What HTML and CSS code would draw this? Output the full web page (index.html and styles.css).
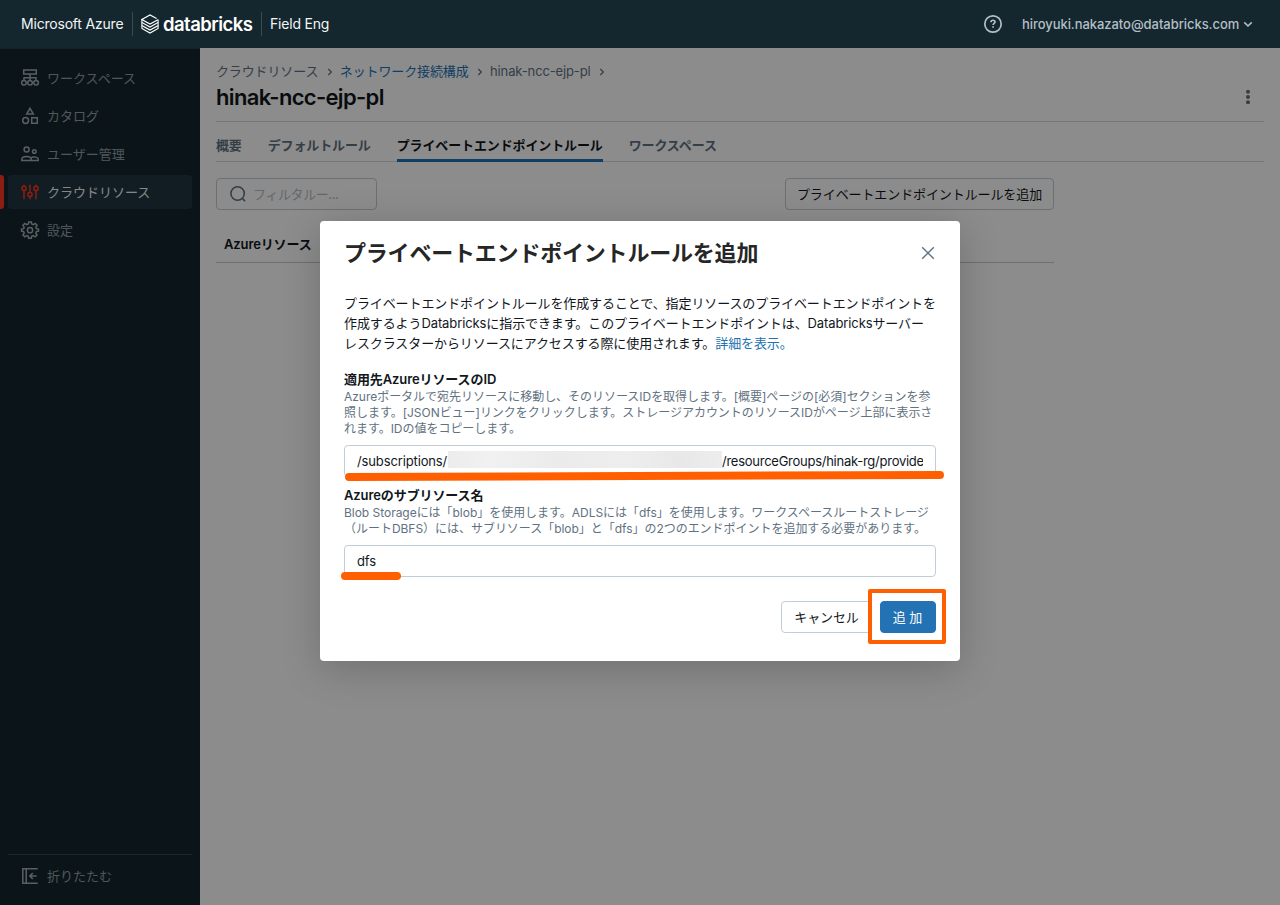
FILE: index.html
```html
<!DOCTYPE html>
<html lang="ja">
<head>
    <meta charset="UTF-8">
    <meta name="viewport" content="width=device-width, initial-scale=1.0">
    <title>hinak-ncc-ejp-pl - Databricks</title>
    <link rel="stylesheet" href="styles.css">
</head>
<body>
    <header class="topbar">
        <span class="brand-azure">Microsoft Azure</span>
        <span class="brand-logo">
            <svg width="18" height="20" viewBox="0 0 18 20" fill="none" stroke="#fff" stroke-width="1.1">
                <path d="M16.9 5.7 9 10 .9 5.5 9 1l6.6 3.6"/>
                <path d="M.9 5.5v3L9 13l8.1-4.5v-3"/>
                <path d="M.9 8.6v3L9 16.1l8.1-4.5v-3"/>
                <path d="M.9 11.7v2.8L9 19l8.1-4.5v-2.8"/>
            </svg>
            <span class="brand-name">databricks</span>
        </span>
        <span class="brand-account">Field Eng</span>
        <svg class="help" width="20" height="20" viewBox="0 0 20 20" fill="none" stroke="#b3bfc5" stroke-width="1.7">
            <circle cx="10" cy="10" r="8.2"/>
            <path d="M8 8.2c0-2.7 4-2.5 4-.2 0 1.4-1.9 1.4-1.9 3.1M10.1 12.3v1.5"/>
        </svg>
        <span class="user">hiroyuki.nakazato@databricks.com</span>
        <svg class="caret" width="10" height="8" viewBox="0 0 10 8" fill="none" stroke="#b3bfc5" stroke-width="1.6">
            <path d="M1.3 2.4 5 6 8.7 2.4"/>
        </svg>
    </header>

    <div class="shell">
        <nav class="sidebar">
            <a class="nav-item">
                <svg width="20" height="20" viewBox="0 0 20 20">
                    <path d="M3.7 2h12.6v4H3.7zM10 6v6M4 12.5V9.7h12v2.8"/>
                    <circle cx="3.9" cy="14.8" r="2.3"/><circle cx="10" cy="14.8" r="2.3"/><circle cx="16.1" cy="14.8" r="2.3"/>
                </svg>
                ワークスペース
            </a>
            <a class="nav-item">
                <svg width="20" height="20" viewBox="0 0 20 20">
                    <path d="M10 2.3 13.3 8H6.7zM11.7 11.7h5.6v5.6h-5.6z"/>
                    <circle cx="5.6" cy="14.5" r="2.9"/>
                </svg>
                カタログ
            </a>
            <a class="nav-item">
                <svg width="20" height="20" viewBox="0 0 20 20">
                    <circle cx="6.6" cy="5.6" r="2.5"/><circle cx="14.3" cy="7.5" r="1.8"/>
                    <path d="M1.8 16.4v-1c0-3.8 9.4-3.8 9.4 0v1zM11.4 16.4h6.8v-1.1c0-2.2-4.6-3-7.1-1.7"/>
                </svg>
                ユーザー管理
            </a>
            <a class="nav-item active">
                <svg width="20" height="20" viewBox="0 0 20 20">
                    <path d="M4 2.7v1.6M4 8.5v8.8M10 2.7v7.6M10 14.7v2.6M16 2.7v1.6M16 8.5v8.8"/>
                    <circle cx="4" cy="6.4" r="2.1"/><circle cx="10" cy="12.5" r="2.1"/><circle cx="16" cy="6.4" r="2.1"/>
                </svg>
                クラウドリソース
            </a>
            <a class="nav-item">
                <svg width="20" height="20" viewBox="0 0 20 20">
                    <path d="M8.3 4 8.7 1.9h2.6L11.7 4l1.5.7 2-1.2 1.9 1.9-1.3 1.9.6 1.4 2.1.4v2l-2.1.5-.6 1.5 1.3 1.9-1.9 1.8-2-1.2-1.5.7-.4 2H8.7l-.4-2-1.5-.7-2 1.2L2.9 15l1.3-1.9-.6-1.5-2.1-.5v-2l2.1-.4.6-1.4-1.3-1.9 1.9-1.9 2 1.2z"/>
                    <circle cx="10" cy="10.2" r="2.6"/>
                </svg>
                設定
            </a>
            <div class="nav-footer">
                <a class="nav-item">
                    <svg width="20" height="20" viewBox="0 0 20 20">
                        <path d="M17.7 2.8H2.8v14.4h14.9M6.2 2.8v14.4M16.6 10H10M12.8 7 9.8 10l3 3"/>
                    </svg>
                    折りたたむ
                </a>
            </div>
        </nav>

        <main class="content">
            <div class="breadcrumb">
                <span>クラウドリソース</span>
                <svg width="6" height="8" viewBox="0 0 6 8"><path d="M1.3 1 4.3 4l-3 3"/></svg>
                <a>ネットワーク接続構成</a>
                <svg width="6" height="8" viewBox="0 0 6 8"><path d="M1.3 1 4.3 4l-3 3"/></svg>
                <span>hinak-ncc-ejp-pl</span>
                <svg width="6" height="8" viewBox="0 0 6 8"><path d="M1.3 1 4.3 4l-3 3"/></svg>
            </div>
            <div class="title-row">
                <h1>hinak-ncc-ejp-pl</h1>
                <svg width="16" height="16" viewBox="0 0 16 16" fill="#5f7281">
                    <circle cx="8" cy="2.7" r="2"/><circle cx="8" cy="8" r="2"/><circle cx="8" cy="13.3" r="2"/>
                </svg>
            </div>
            <div class="tabs">
                <a>概要</a>
                <a>デフォルトルール</a>
                <a class="selected">プライベートエンドポイントルール</a>
                <a>ワークスペース</a>
            </div>
            <div class="rules">
                <div class="toolbar">
                    <div class="filter">
                        <svg width="18" height="18" viewBox="0 0 18 18" fill="none" stroke="#5f7281" stroke-width="1.6">
                            <circle cx="8.6" cy="8.5" r="6.7"/><path d="m13.2 13.2 2.8 2.9"/>
                        </svg>
                        フィルタルー...
                    </div>
                    <button class="btn">プライベートエンドポイントルールを追加</button>
                </div>
                <div class="table-head">Azureリソース</div>
            </div>
        </main>

        <div class="mask">
            <div class="modal">
                <div class="modal-header">
                    <h2>プライベートエンドポイントルールを追加</h2>
                    <svg width="16" height="16" viewBox="0 0 16 16" fill="none" stroke="#5f7281" stroke-width="1.4">
                        <path d="m2.2 2.2 11.6 11.6M13.8 2.2 2.2 13.8"/>
                    </svg>
                </div>
                <p class="intro">
                    プライベートエンドポイントルールを作成することで、指定リソースのプライベートエンドポイントを<br>作成するようDatabricksに指示できます。このプライベートエンドポイントは、Databricksサーバー<br>レスクラスターからリソースにアクセスする際に使用されます。<a>詳細を表示。</a>
                </p>
                <div class="field">
                    <label>適用先AzureリソースのID</label>
                    <p class="hint">Azureポータルで宛先リソースに移動し、そのリソースIDを取得します。[概要]ページの[必須]セクションを参<br>照します。[JSONビュー]リンクをクリックします。ストレージアカウントのリソースIDがページ上部に表示さ<br>れます。IDの値をコピーします。</p>
                    <div class="input">
                        <span class="input-start">/subscriptions/3</span>
                        <span class="redacted"></span>
                        <span class="input-end">/resourceGroups/hinak-rg/provide</span>
                    </div>
                    <svg class="marker marker-id" width="602" height="14" viewBox="0 0 602 14">
                        <path d="M6 8 597 6"/>
                    </svg>
                </div>
                <div class="field">
                    <label>Azureのサブリソース名</label>
                    <p class="hint">Blob Storageには「blob」を使用します。ADLSには「dfs」を使用します。ワークスペースルートストレージ<br>（ルートDBFS）には、サブリソース「blob」と「dfs」の2つのエンドポイントを追加する必要があります。</p>
                    <div class="input">dfs</div>
                    <svg class="marker marker-name" width="60" height="8" viewBox="0 0 60 8">
                        <path d="M4 4h52"/>
                    </svg>
                </div>
                <div class="actions">
                    <button class="btn cancel">キャンセル</button>
                    <button class="btn primary">追 加</button>
                    <span class="marker-box"></span>
                </div>
            </div>
        </div>
    </div>
</body>
</html>
```
FILE: styles.css
```css
* {
    box-sizing: border-box;
}
body {
    margin: 0;
    height: 905px;
    overflow: hidden;
    font-family: Inter, "Noto Sans CJK JP", sans-serif;
    font-size: 13px;
    line-height: 20px;
    color: #11171c;
    background-color: #fff;
}
h1, h2, p {
    margin: 0;
}
svg {
    flex: none;
    display: block;
}
a {
    color: #2272b4;
}

/* Top bar */
.topbar {
    display: flex;
    align-items: center;
    height: 48px;
    padding: 0 27px 0 21px;
    background-color: #14272e;
    color: #fff;
    white-space: nowrap;
}
.brand-azure, .brand-account {
    font-size: 14px;
    letter-spacing: -0.2px;
    color: #f2f5f6;
}
.brand-azure {
    width: 111px;
}
.brand-logo {
    display: flex;
    align-items: center;
    gap: 4px;
    width: 130px;
    height: 24px;
    padding-left: 8px;
    border-left: 1px solid #3a4b52;
    border-right: 1px solid #3a4b52;
}
.brand-name {
    font-size: 18.5px;
    font-weight: 600;
    letter-spacing: -0.55px;
}
.brand-account {
    padding-left: 8px;
}
.help {
    margin-left: auto;
}
.user {
    width: 217px;
    margin-left: 19px;
    font-weight: 500;
    letter-spacing: -0.06px;
    color: #b3bfc5;
}
.caret {
    margin-left: 4px;
}

/* Sidebar */
.shell {
    position: relative;
    display: flex;
    height: 857px;
}
.sidebar {
    display: flex;
    flex-direction: column;
    gap: 4px;
    width: 200px;
    padding: 12px 8px 8px;
    border-top: 1px solid #2c3d44;
    background-color: #14272e;
}
.nav-item {
    position: relative;
    display: flex;
    align-items: center;
    gap: 7px;
    height: 34px;
    padding: 0 0 1px 12px;
    border-radius: 4px;
    color: #929fa6;
}
.nav-item svg {
    margin-top: 1px;
    fill: none;
    stroke: #a3b0b7;
    stroke-width: 1.5;
}
.nav-item.active {
    background-color: #20353f;
    color: #f2f5f6;
}
.nav-item.active svg {
    stroke: #ff3621;
}
.nav-item.active::before {
    content: "";
    position: absolute;
    left: -8px;
    top: 0;
    width: 4px;
    height: 34px;
    border-radius: 0 3px 3px 0;
    background-color: #ff3621;
}
.nav-footer {
    margin-top: auto;
    padding: 4px 0;
    border-top: 1px solid #35464d;
}

/* Page */
.content {
    flex: 1;
    padding: 13px 16px 0;
}
.breadcrumb {
    display: flex;
    align-items: center;
    height: 20px;
    color: #5f7281;
    letter-spacing: -0.13px;
}
.breadcrumb svg {
    margin: 1px 7px 0 8.5px;
    fill: none;
    stroke: #5f7281;
    stroke-width: 1.3;
}
.title-row {
    display: flex;
    align-items: center;
    justify-content: space-between;
    height: 41px;
    padding-bottom: 8px;
    border-bottom: 1px solid #d1d9e1;
}
.title-row svg {
    margin-right: 8px;
}
h1 {
    font-size: 22px;
    line-height: 28px;
    font-weight: 600;
    letter-spacing: -0.67px;
}
.tabs {
    display: flex;
    gap: 26px;
    height: 40px;
    border-bottom: 1px solid #d1d9e1;
}
.tabs a {
    height: 40px;
    padding-top: 13px;
    font-weight: 600;
    letter-spacing: -0.13px;
    color: #5f7281;
}
.tabs .selected {
    border-bottom: 3px solid #2272b4;
    color: #11171c;
}
.rules {
    width: 838px;
    padding-top: 16px;
}
.toolbar {
    display: flex;
    justify-content: space-between;
}
.filter {
    display: flex;
    align-items: center;
    gap: 6px;
    width: 161px;
    height: 32px;
    padding-left: 12px;
    border: 1px solid #c0cdd8;
    border-radius: 4px;
    letter-spacing: -0.4px;
    color: #b3bec6;
}
.btn {
    height: 32px;
    padding: 0 12px 1px;
    border: 1px solid #c0cdd8;
    border-radius: 4px;
    background: none;
    font: inherit;
    letter-spacing: -0.1px;
    color: #11171c;
    white-space: nowrap;
}
.rules .btn {
    width: 269px;
    padding: 0 0 1px;
}
.table-head {
    height: 53px;
    padding: 24px 8px 0;
    border-bottom: 1px solid #c0cdd8;
    font-weight: 600;
    letter-spacing: -0.13px;
}

/* Modal */
.mask {
    position: absolute;
    inset: 0;
    padding-top: 173px;
    background-color: rgba(0, 0, 0, 0.45);
}
.modal {
    width: 640px;
    height: 440px;
    margin: 0 auto;
    padding: 16px 24px 0;
    border-radius: 4px;
    background-color: #fff;
    box-shadow: 0 8px 40px rgba(0, 0, 0, 0.2);
}
.modal-header {
    display: flex;
    align-items: center;
    justify-content: space-between;
    height: 32px;
}
.modal-header h2 {
    font-size: 22px;
    font-weight: 600;
    line-height: 32px;
    letter-spacing: -0.2px;
    color: #262626;
}
.intro {
    margin: 24px 0 16px;
    white-space: nowrap;
    letter-spacing: -0.1px;
}
.field {
    position: relative;
    height: 116px;
}
.field + .field {
    height: 92px;
}
.field label {
    display: block;
    height: 20px;
    font-weight: 600;
    letter-spacing: -0.1px;
}
.hint {
    margin-bottom: 8px;
    font-size: 12px;
    line-height: 16px;
    letter-spacing: -0.03px;
    white-space: nowrap;
    color: #5f7281;
}
.input {
    display: flex;
    align-items: center;
    height: 32px;
    padding: 0 12px;
    border: 1px solid #c0cdd8;
    border-radius: 4px;
    letter-spacing: -0.13px;
    white-space: nowrap;
    overflow: hidden;
}
.input-start {
    width: 91px;
    overflow: hidden;
}
.redacted {
    width: 274px;
    height: 17px;
    margin-bottom: 3px;
    flex: none;
    background: linear-gradient(90deg, #ececec, #f1f1f1 15%, #ebebeb 40%, #eee 65%, #e8e8e8 85%, #ededed);
}
.input-end {
    flex: 1;
    letter-spacing: -0.26px;
    overflow: hidden;
}
.actions {
    position: relative;
    display: flex;
    justify-content: flex-end;
    gap: 8px;
    margin-top: 24px;
}
.cancel {
    width: 91px;
}
.primary {
    width: 56px;
    padding: 0 1px 1px 0;
    border-color: #2272b4;
    background-color: #2272b4;
    color: #fff;
}

/* Highlight strokes */
.marker {
    position: absolute;
    fill: none;
    stroke: #ff5f00;
    stroke-width: 8;
    stroke-linecap: round;
}
.marker-id {
    left: -1px;
    top: 100px;
}
.marker-name {
    left: -3px;
    top: 87px;
}
.marker-box {
    position: absolute;
    right: -10px;
    top: -12px;
    width: 78px;
    height: 55px;
    border: 4px solid #ff5f00;
    border-radius: 2px;
}
```
